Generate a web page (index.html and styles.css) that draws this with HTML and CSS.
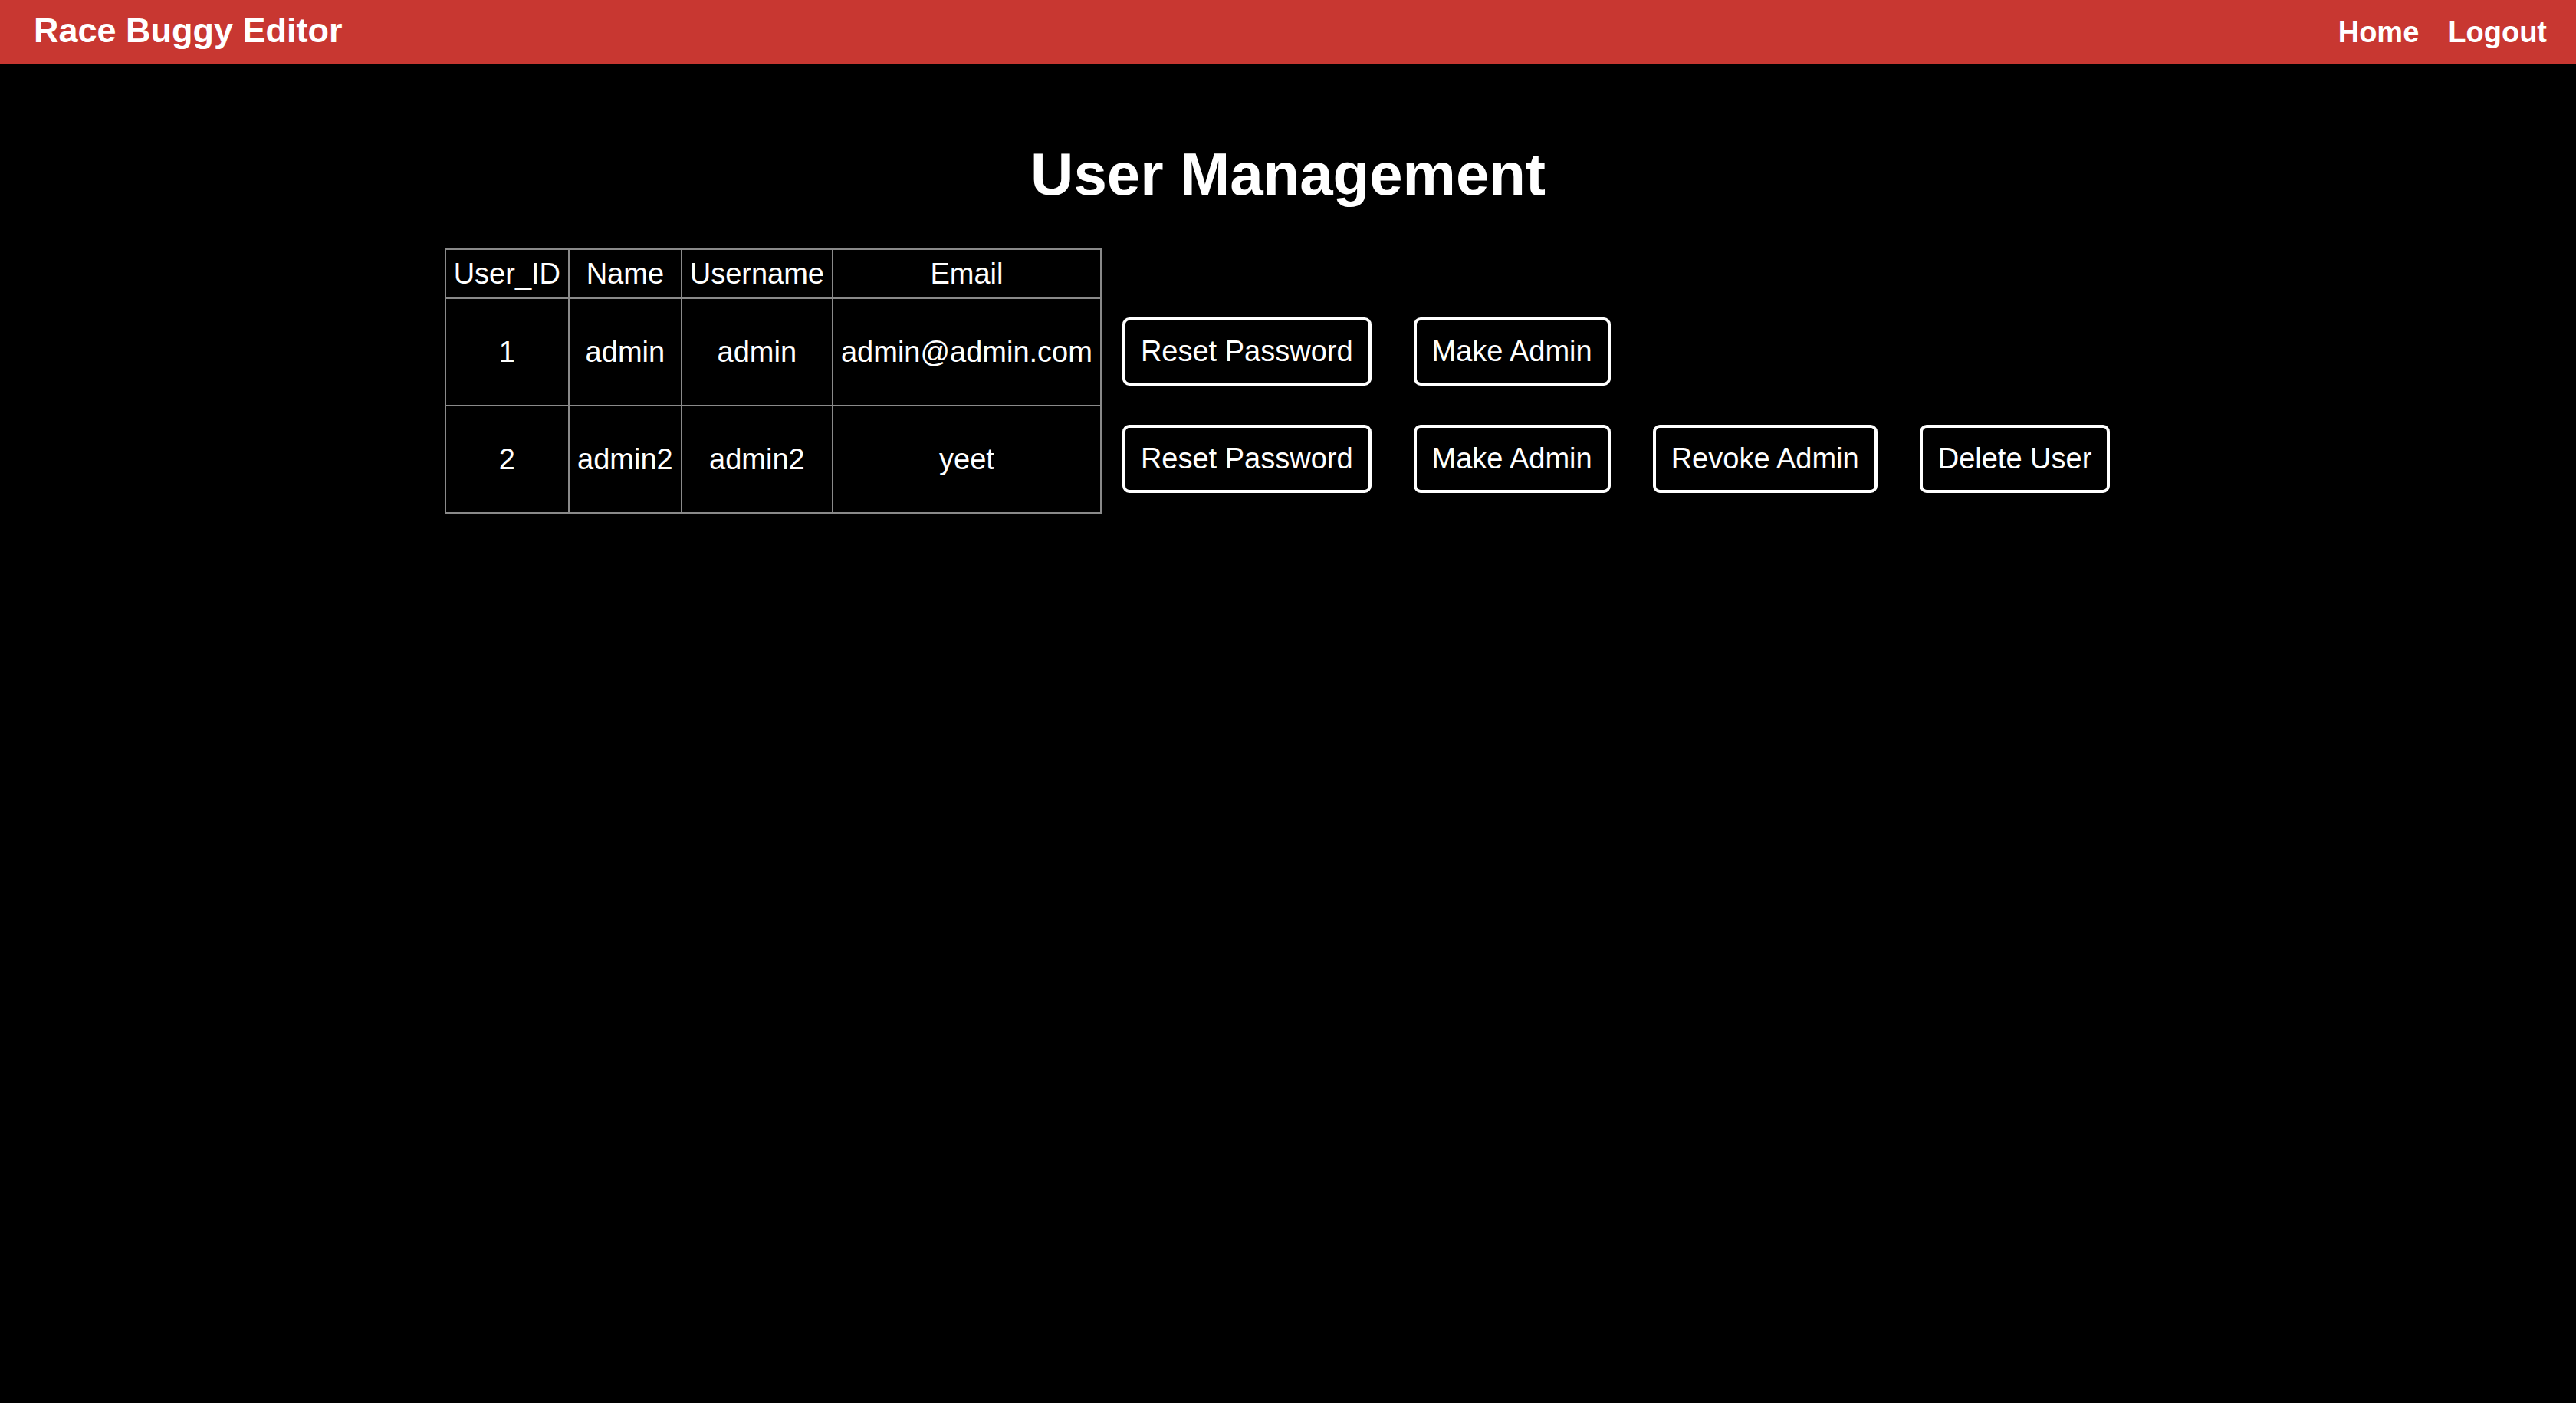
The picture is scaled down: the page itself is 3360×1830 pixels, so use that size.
FILE: index.html
```html
<!DOCTYPE html>
<html lang="en">
<head>
<meta charset="utf-8">
<title>User Management - Race Buggy Editor</title>
<link rel="stylesheet" href="styles.css">
</head>
<body>
<nav class="navbar">
  <a class="brand" href="#">Race Buggy Editor</a>
  <div class="nav-links">
    <a class="nav-link" href="#">Home</a>
    <a class="nav-link" href="#">Logout</a>
  </div>
</nav>
<main class="content">
  <h1 class="page-title">User Management</h1>
  <table class="users">
    <thead>
      <tr>
        <th class="cell">User_ID</th>
        <th class="cell">Name</th>
        <th class="cell">Username</th>
        <th class="cell">Email</th>
        <th class="actions-head"></th>
      </tr>
    </thead>
    <tbody>
      <tr>
        <td class="cell">1</td>
        <td class="cell">admin</td>
        <td class="cell">admin</td>
        <td class="cell">admin@admin.com</td>
        <td class="actions">
          <div class="action-list">
            <button class="btn">Reset Password</button>
            <button class="btn">Make Admin</button>
          </div>
        </td>
      </tr>
      <tr>
        <td class="cell">2</td>
        <td class="cell">admin2</td>
        <td class="cell">admin2</td>
        <td class="cell">yeet</td>
        <td class="actions">
          <div class="action-list">
            <button class="btn">Reset Password</button>
            <button class="btn">Make Admin</button>
            <button class="btn">Revoke Admin</button>
            <button class="btn">Delete User</button>
          </div>
        </td>
      </tr>
    </tbody>
  </table>
</main>
</body>
</html>
```
FILE: styles.css
```css
html, body {
  margin: 0;
  padding: 0;
  background: #000;
  color: #fff;
  font-family: "Liberation Sans", Arial, Helvetica, sans-serif;
  min-height: 100%;
}

.navbar {
  display: flex;
  align-items: baseline;
  justify-content: space-between;
  height: 84px;
  box-sizing: border-box;
  padding: 14px 38px 0 44px;
  background: #c83731;
}

.brand {
  color: #fff;
  text-decoration: none;
  font-weight: bold;
  font-size: 45px;
}

.nav-links {
  display: flex;
  align-items: baseline;
  gap: 38px;
}

.nav-link {
  color: #fff;
  text-decoration: none;
  font-weight: bold;
  font-size: 38px;
}

.content {
  padding-top: 98px;
}

.page-title {
  margin: 0 0 51px 0;
  text-align: center;
  font-size: 78px;
  font-weight: bold;
  line-height: normal;
}

.users {
  margin: 0 auto;
  border-collapse: collapse;
  font-size: 38px;
}

.cell {
  border: 2px solid #8a8a8a;
  padding: 9px 10px;
  text-align: center;
  vertical-align: middle;
  font-weight: normal;
  line-height: 44px;
  white-space: nowrap;
}

.actions-head {
  border: none;
  padding: 0;
}

.actions {
  border: none;
  padding: 25px 0 26px;
  vertical-align: middle;
}

.action-list {
  display: flex;
  gap: 55px;
  padding: 0 27px;
}

.btn {
  font-family: "Liberation Sans", Arial, Helvetica, sans-serif;
  font-size: 38px;
  line-height: 44px;
  color: #fff;
  background: #000;
  border: 4px solid #fff;
  border-radius: 9px;
  padding: 18px 20px 19px;
  white-space: nowrap;
  cursor: pointer;
}
```
